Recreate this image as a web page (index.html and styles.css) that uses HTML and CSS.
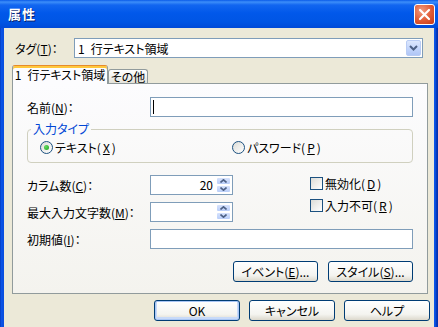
FILE: index.html
```html
<!DOCTYPE html>
<html lang="ja">
<head>
    <meta charset="UTF-8">
    <meta name="viewport" content="width=device-width, initial-scale=1.0">
    <title>属性</title>
    <link rel="stylesheet" href="styles.css">
</head>
<body>
    <div class="window">
        <div class="titlebar">
            <span class="title">属性</span>
            <button type="button" class="close" aria-label="閉じる">
                <svg width="13" height="13" viewBox="0 0 13 13"><path d="M2 2 L11 11 M11 2 L2 11" stroke="#fff" stroke-width="2.2" stroke-linecap="round"/></svg>
            </button>
        </div>
        <div class="client">
            <div class="tag-row">
                <label class="tag-label">タグ(<u>T</u>)：</label>
                <div class="combo">
                    <span class="combo-text">1&ensp;行テキスト領域</span>
                    <span class="combo-btn">
                        <svg width="9" height="6" viewBox="0 0 9 6"><path d="M1 1 L4.5 4.5 L8 1" fill="none" stroke="#4D6185" stroke-width="2"/></svg>
                    </span>
                </div>
            </div>

            <div class="tabs">
                <div class="tab active">1&ensp;行テキスト領域</div>
                <div class="tab">その他</div>
            </div>

            <div class="panel">
                <div class="row">
                    <label class="field-label">名前(<u>N</u>)：</label>
                    <div class="textbox"><span class="caret"></span></div>
                </div>

                <fieldset class="group">
                    <legend>入力タイプ</legend>
                    <div class="radios">
                        <label class="radio-item first"><span class="radio checked"></span>テキスト(<u>X</u>)</label>
                        <label class="radio-item"><span class="radio"></span>パスワード(<u>P</u>)</label>
                    </div>
                </fieldset>

                <div class="mid">
                    <div class="mid-left">
                        <div class="row">
                            <label class="field-label">カラム数(<u>C</u>)：</label>
                            <div class="spin">
                                <span class="spin-value">20</span>
                                <span class="spin-btns">
                                    <span class="spin-btn"><svg width="7" height="4" viewBox="0 0 7 4"><path d="M0.5 3.5 L3.5 0.8 L6.5 3.5" fill="none" stroke="#4D6185" stroke-width="1.6"/></svg></span>
                                    <span class="spin-btn"><svg width="7" height="4" viewBox="0 0 7 4"><path d="M0.5 0.5 L3.5 3.2 L6.5 0.5" fill="none" stroke="#4D6185" stroke-width="1.6"/></svg></span>
                                </span>
                            </div>
                        </div>
                        <div class="row gap">
                            <label class="field-label">最大入力文字数(<u>M</u>)：</label>
                            <div class="spin">
                                <span class="spin-value"></span>
                                <span class="spin-btns">
                                    <span class="spin-btn"><svg width="7" height="4" viewBox="0 0 7 4"><path d="M0.5 3.5 L3.5 0.8 L6.5 3.5" fill="none" stroke="#4D6185" stroke-width="1.6"/></svg></span>
                                    <span class="spin-btn"><svg width="7" height="4" viewBox="0 0 7 4"><path d="M0.5 0.5 L3.5 3.2 L6.5 0.5" fill="none" stroke="#4D6185" stroke-width="1.6"/></svg></span>
                                </span>
                            </div>
                        </div>
                    </div>
                    <div class="checks">
                        <label class="check-item"><span class="check"></span>無効化(<u>D</u>)</label>
                        <label class="check-item"><span class="check"></span>入力不可(<u>R</u>)</label>
                    </div>
                </div>

                <div class="row gap">
                    <label class="field-label">初期値(<u>I</u>)：</label>
                    <div class="textbox"></div>
                </div>

                <div class="panel-buttons">
                    <button type="button" class="btn">イベント(<u>E</u>)...</button>
                    <button type="button" class="btn">スタイル(<u>S</u>)...</button>
                </div>
            </div>

            <div class="dialog-buttons">
                <button type="button" class="btn default">OK</button>
                <button type="button" class="btn">キャンセル</button>
                <button type="button" class="btn">ヘルプ</button>
            </div>
        </div>
    </div>
</body>
</html>
```

FILE: styles.css
```css
* {
    box-sizing: border-box;
}
body {
    margin: 0;
    font-family: "Noto Sans CJK JP", "Noto Sans", sans-serif;
    font-size: 12px;
    font-feature-settings: "palt" 1;
    color: #000;
    background: #0A4AD8;
}
.window {
    width: 438px;
    height: 327px;
    display: flex;
    flex-direction: column;
    overflow: hidden;
    background: linear-gradient(to right, #0332B0 0, #0B55E8 1px, #0A4FE0 3px, #0B55E8 435px, #0332B0 437px);
}
.titlebar {
    height: 28px;
    flex: none;
    display: flex;
    align-items: center;
    justify-content: space-between;
    padding: 0 3px 0 8px;
    background: linear-gradient(#0A5BE8 0, #3D8EF9 2px, #1266F0 5px, #0158EA 13px, #0055E4 22px, #004AD8 28px);
    color: #fff;
}
.title {
    font-weight: bold;
    font-size: 13px;
    line-height: 16px;
    letter-spacing: 1px;
    text-shadow: 1px 1px 0 #0A1F6A;
}
.close {
    width: 21px;
    height: 21px;
    padding: 0;
    border: 1px solid #fff;
    border-radius: 3px;
    background: radial-gradient(circle at 35% 30%, #F29A7E, #E05A34 55%, #C53A16);
    display: flex;
    align-items: center;
    justify-content: center;
}
.client {
    flex: 1;
    margin: 0 4px;
    background: #ECE9D8;
}
.tag-row {
    display: flex;
    align-items: center;
    height: 20px;
    margin-top: 10px;
    padding-left: 11px;
}
.tag-label {
    width: 59px;
}
.combo {
    width: 349px;
    height: 20px;
    border: 1px solid #7F9DB9;
    background: #fff;
    display: flex;
    align-items: center;
    justify-content: space-between;
    padding-left: 3px;
}
.combo-btn {
    width: 15px;
    height: 16px;
    margin-right: 1px;
    border: 1px solid #B9CCF4;
    border-radius: 2px;
    background: linear-gradient(#DCE7FD, #C0D3FB 60%, #B0C6F6);
    display: flex;
    align-items: center;
    justify-content: center;
}
.tabs {
    display: flex;
    align-items: flex-end;
    height: 18px;
    margin: 7px 0 0 8px;
}
.tab {
    height: 14px;
    width: 40px;
    border: 1px solid #919B9C;
    border-bottom: none;
    border-radius: 3px 3px 0 0;
    background: linear-gradient(#FFFFFF, #F3F3EF 50%, #E3E2DA);
    text-align: center;
    line-height: 13px;
    white-space: nowrap;
}
.tab.active {
    position: relative;
    z-index: 1;
    width: 96px;
    height: 19px;
    margin-bottom: -1px;
    border-top: 1px solid #E68B2C;
    background: #FCFCFE;
    box-shadow: inset 0 2px 0 #FFC83C;
    padding-top: 2px;
    line-height: 14px;
}
.panel {
    margin-left: 8px;
    width: 416px;
    height: 211px;
    border: 1px solid #919B9C;
    background: linear-gradient(#FCFCFE, #F4F3EE);
    padding: 13px 14px 0;
}
.row {
    display: flex;
    align-items: center;
    height: 20px;
}
.row.gap {
    margin-top: 7px;
}
.field-label {
    width: 123px;
    flex: none;
}
.textbox {
    width: 263px;
    height: 20px;
    border: 1px solid #7F9DB9;
    background: #fff;
    display: flex;
    align-items: center;
}
.caret {
    width: 1px;
    height: 14px;
    margin-left: 2px;
    background: #000;
}
.group {
    margin: 5px 0 0;
    padding: 0 12px 8px;
    border: 1px solid #D0D0BF;
    border-radius: 4px;
}
.group legend {
    margin-left: -9px;
    padding: 0 2px;
    line-height: 14px;
    color: #0046D5;
}
.radios {
    display: flex;
    padding-top: 4px;
    height: 18px;
}
.radio-item, .check-item {
    display: flex;
    align-items: center;
    gap: 2px;
    height: 14px;
}
.radio-item.first {
    width: 192px;
}
.radio {
    width: 13px;
    height: 13px;
    border: 1px solid #1C5180;
    border-radius: 50%;
    background: linear-gradient(135deg, #DCDCD7, #FFFFFF);
    display: flex;
    align-items: center;
    justify-content: center;
}
.radio.checked::after {
    content: "";
    width: 5px;
    height: 5px;
    border-radius: 50%;
    background: radial-gradient(circle at 35% 35%, #62DA5F, #21A121);
}
.check {
    width: 13px;
    height: 13px;
    border: 1px solid #1C5180;
    background: linear-gradient(135deg, #DCDCD7, #FFFFFF);
}
.mid {
    display: flex;
    margin-top: 12px;
}
.checks {
    margin-left: 77px;
    padding-top: 1px;
    display: flex;
    flex-direction: column;
    gap: 8px;
}
.spin {
    width: 83px;
    height: 20px;
    border: 1px solid #7F9DB9;
    background: #fff;
    display: flex;
    padding: 1px;
}
.spin-value {
    flex: 1;
    text-align: right;
    padding-right: 3px;
    line-height: 16px;
}
.spin-btns {
    width: 15px;
    display: flex;
    flex-direction: column;
}
.spin-btn {
    flex: 1;
    border: 1px solid #fff;
    border-radius: 2px;
    background: linear-gradient(#D6E2FC, #B9CEF9);
    display: flex;
    align-items: center;
    justify-content: center;
}
.panel-buttons {
    display: flex;
    justify-content: flex-end;
    gap: 10px;
    margin-top: 12px;
}
.btn {
    width: 85px;
    height: 21px;
    padding: 0;
    border: 1px solid #003C74;
    border-radius: 3px;
    background: linear-gradient(#FFFFFF, #F4F4F0 70%, #DCD8CC);
    font: inherit;
    font-feature-settings: "palt" 1;
    color: #000;
    line-height: 18px;
}
.btn.default {
    box-shadow: inset 0 0 0 1px #A9C6F5, inset 0 -1px 0 2px #C8DAF8;
}
.dialog-buttons {
    display: flex;
    justify-content: flex-end;
    gap: 9px;
    margin-top: 6px;
    padding-right: 4px;
}
.dialog-buttons .btn {
    width: 86px;
}
```
